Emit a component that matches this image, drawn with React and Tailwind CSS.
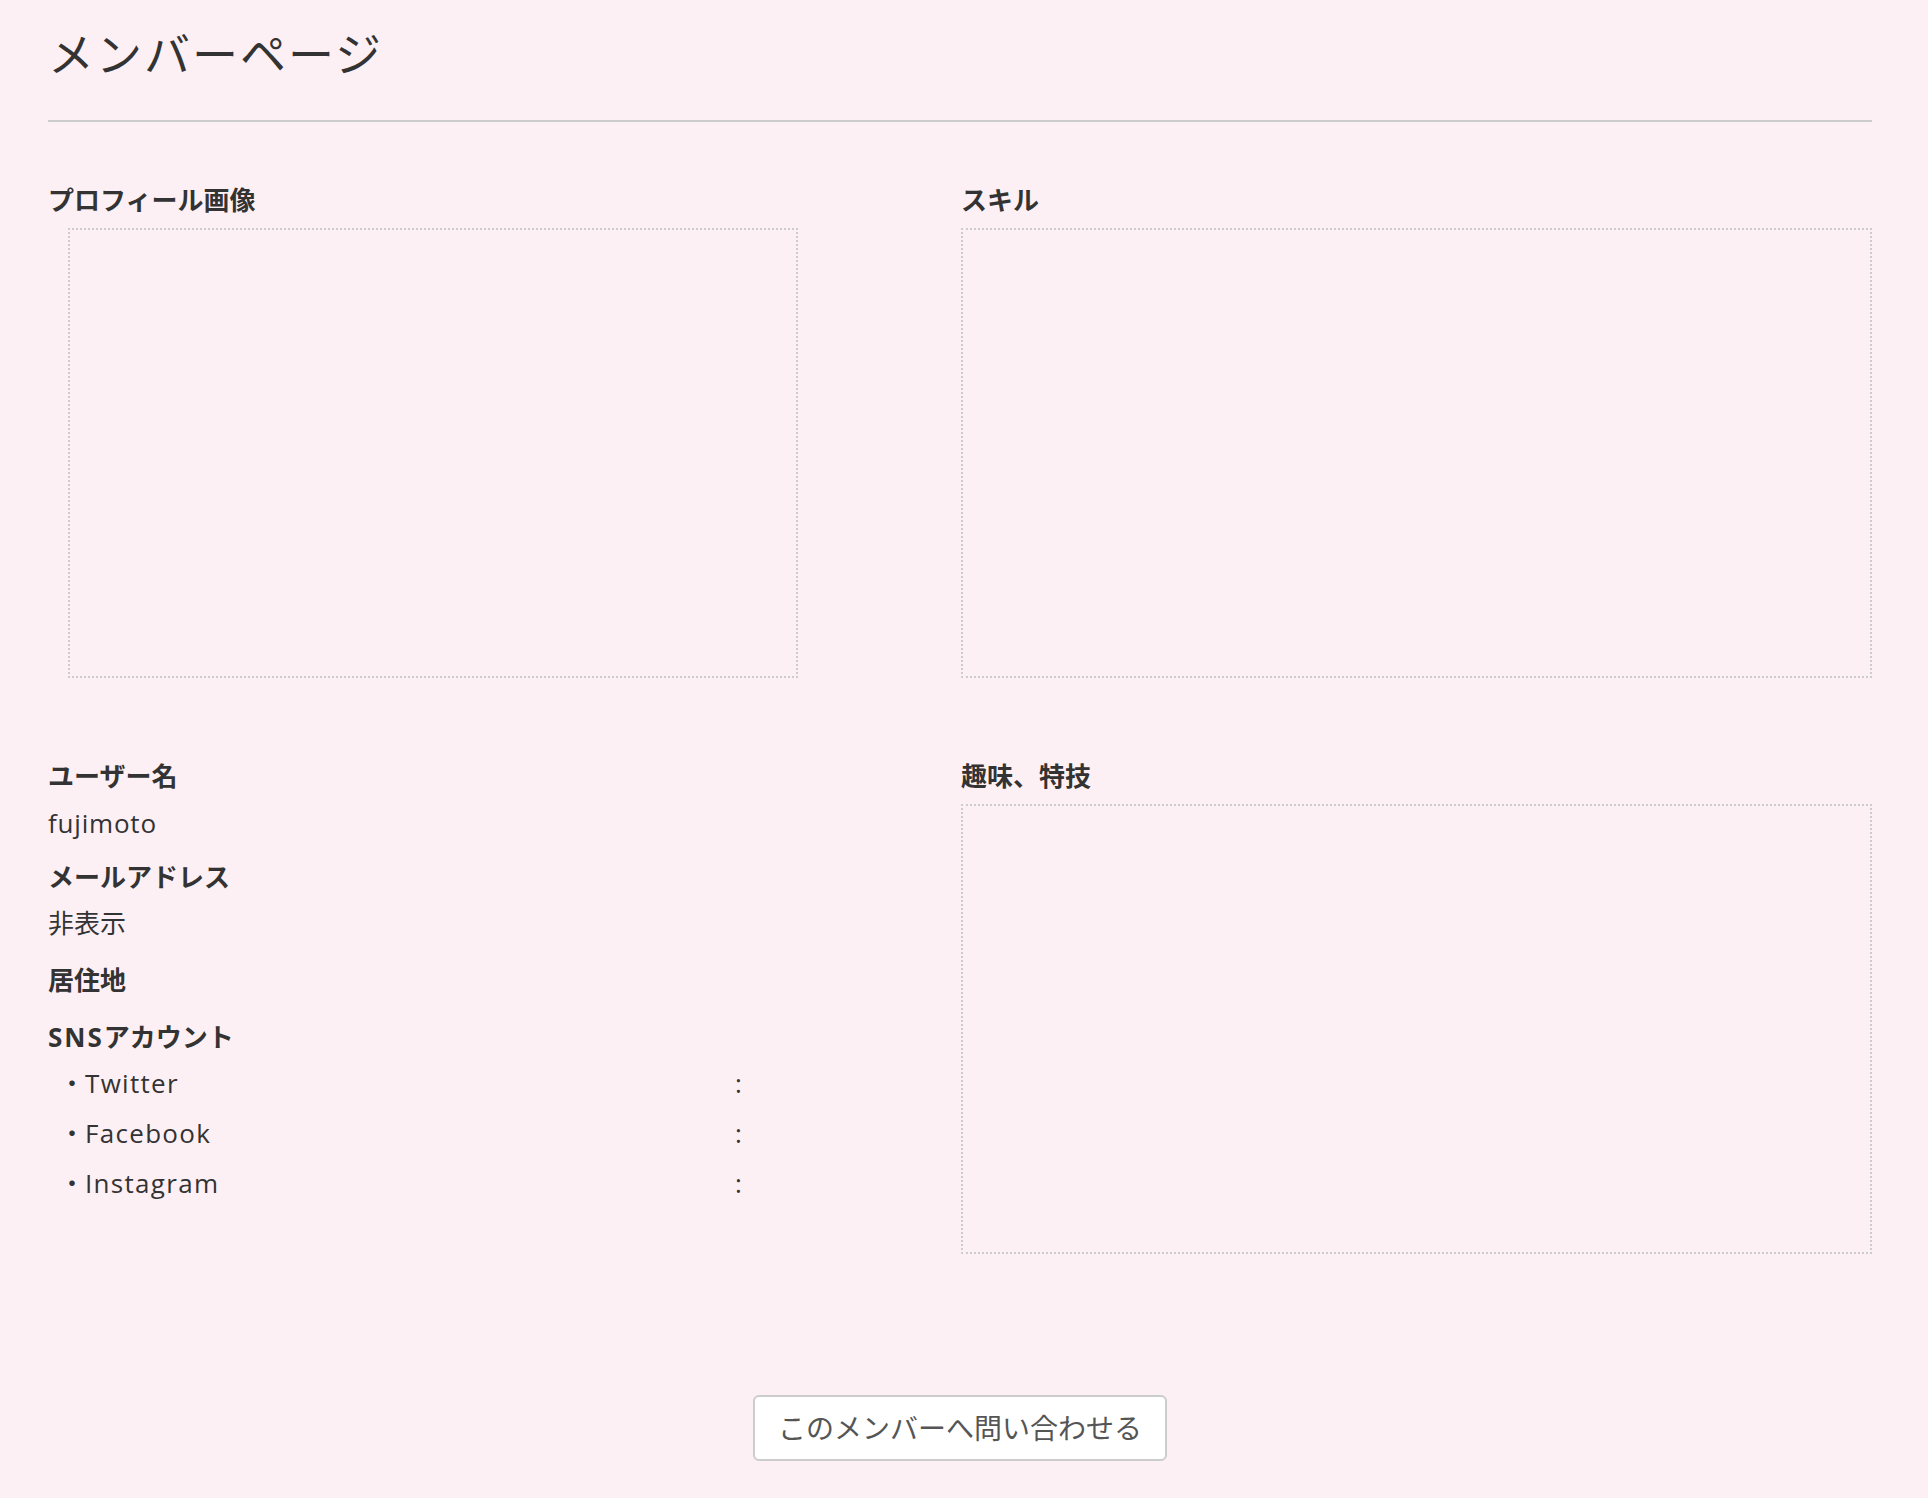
import React from 'react';

const font = { fontFamily: '"Open Sans", "Noto Sans CJK JP", sans-serif' };

const Label = ({ children, className = '' }) => (
    <div className={`h-9 leading-9 text-[26px] font-bold text-[#333] ${className}`}>{children}</div>
);

const Value = ({ children, className = '' }) => (
    <div className={`h-9 leading-9 text-[26px] text-[#333] ${className}`}>{children}</div>
);

const snsList = ['Twitter', 'Facebook', 'Instagram'];

const App = () => {
    return (
        <div
            className="min-h-[1498px] bg-[#fdf0f4] pl-12 pr-14 pt-[25px] pb-[37px] text-[#333]"
            style={font}
        >
            {/* Header */}
            <h1 className="h-14 leading-[56px] text-[46px] font-normal tracking-[2px]">メンバーページ</h1>
            <div className="mt-[39px] h-[2px] bg-[#cccccc]"></div>

            {/* Row 1 */}
            <div className="mt-[60px] grid grid-cols-2">
                <div>
                    <Label>プロフィール画像</Label>
                    <div className="mt-[10px] ml-5 w-[730px] h-[450px] border-2 border-dotted border-[#cccccc]"></div>
                </div>
                <div className="pl-px">
                    <Label>スキル</Label>
                    <div className="mt-[10px] h-[450px] border-2 border-dotted border-[#cccccc]"></div>
                </div>
            </div>

            {/* Row 2 */}
            <div className="mt-[80px] grid grid-cols-2">
                <div>
                    <Label>ユーザー名</Label>
                    <Value className="mt-[11px] tracking-[0.8px]">fujimoto</Value>
                    <Label className="mt-[18px]">メールアドレス</Label>
                    <Value className="mt-[10px]">非表示</Value>
                    <Label className="mt-[21px]">居住地</Label>
                    <Label className="mt-[21px]">
                        <span className="tracking-[2px]">SNS</span>アカウント
                    </Label>
                    <div className="mt-[10px] flex flex-col gap-[14px]">
                        {snsList.map((name) => (
                            <div key={name} className="flex h-9 leading-9 text-[26px] pl-[11px]">
                                <span className="w-[676px]">
                                    ・<span className="tracking-[1.3px]">{name}</span>
                                </span>
                                <span>:</span>
                            </div>
                        ))}
                    </div>
                </div>
                <div className="pl-px">
                    <Label>趣味、特技</Label>
                    <div className="mt-[10px] h-[450px] border-2 border-dotted border-[#cccccc]"></div>
                </div>
            </div>

            {/* Contact button */}
            <div className="mt-[141px] flex justify-center">
                <button className="w-[414px] h-[66px] bg-white border-2 border-[#cccccc] rounded-md text-[28px] text-[#555]">
                    このメンバーへ問い合わせる
                </button>
            </div>
        </div>
    );
};

export default App;
